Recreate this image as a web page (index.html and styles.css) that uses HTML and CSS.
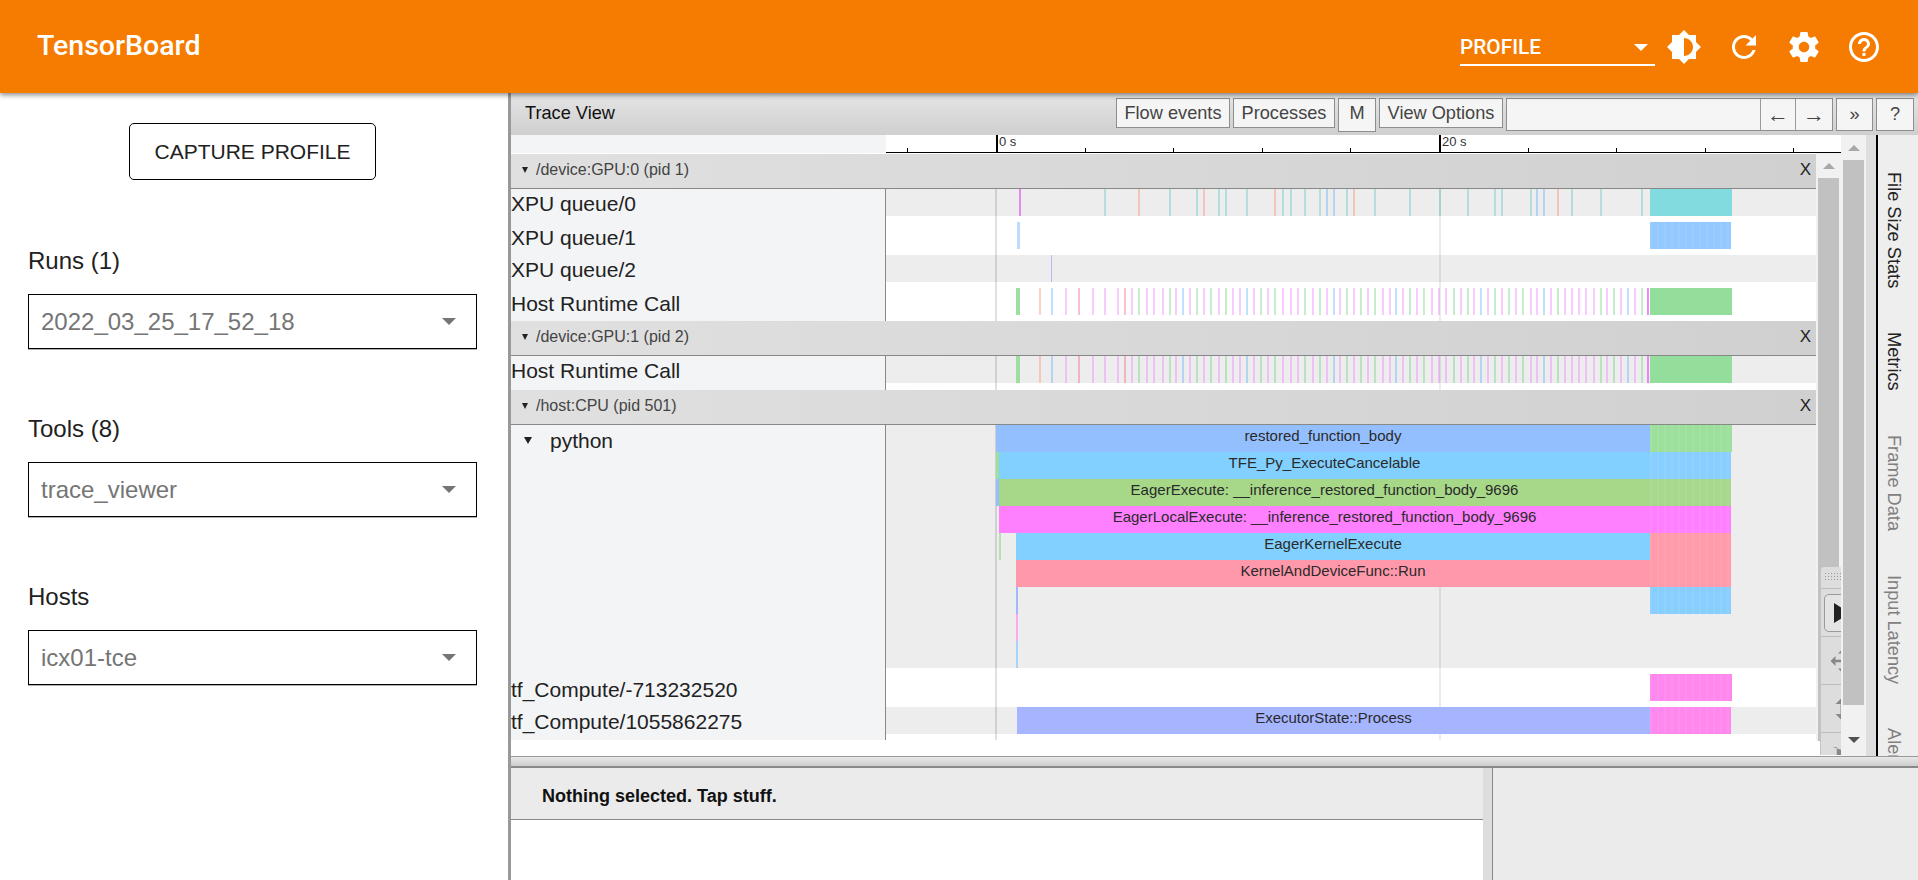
FILE: index.html
```html
<!DOCTYPE html>
<html>
  <head>
    <meta charset="UTF-8">
    <title>TensorBoard</title>
    <link rel="stylesheet" href="styles.css">
  </head>
  <body>
    <!-- Top bar -->
    <header class="topbar">
      <div class="brand">TensorBoard</div>
      <div class="plugin-select">
        <span>PROFILE</span>
        <i class="caret caret-white"></i>
      </div>
      <svg class="top-icon" viewBox="0 0 24 24"><path d="M20 15.31L23.31 12 20 8.69V4h-4.69L12 .69 8.69 4H4v4.69L.69 12 4 15.31V20h4.69L12 23.31 15.31 20H20v-4.69zM12 18V6c3.31 0 6 2.69 6 6s-2.69 6-6 6z"/></svg>
      <svg class="top-icon" viewBox="0 0 24 24"><path d="M17.65 6.35C16.2 4.9 14.21 4 12 4c-4.42 0-7.99 3.58-7.99 8s3.57 8 7.99 8c3.73 0 6.84-2.55 7.73-6h-2.08c-.82 2.33-3.04 4-5.65 4-3.31 0-6-2.69-6-6s2.69-6 6-6c1.66 0 3.14.69 4.22 1.78L13 11h7V4l-2.35 2.35z"/></svg>
      <svg class="top-icon" viewBox="0 0 24 24"><path d="M19.43 12.98c.04-.32.07-.64.07-.98s-.03-.66-.07-.98l2.11-1.65c.19-.15.24-.42.12-.64l-2-3.46c-.12-.22-.39-.3-.61-.22l-2.49 1c-.52-.4-1.08-.73-1.69-.98l-.38-2.65C14.46 2.18 14.25 2 14 2h-4c-.25 0-.46.18-.49.42l-.38 2.65c-.61.25-1.17.59-1.69.98l-2.49-1c-.23-.09-.49 0-.61.22l-2 3.46c-.13.22-.07.49.12.64l2.11 1.65c-.04.32-.07.65-.07.98s.03.66.07.98l-2.11 1.65c-.19.15-.24.42-.12.64l2 3.46c.12.22.39.3.61.22l2.49-1c.52.4 1.08.73 1.69.98l.38 2.65c.03.24.24.42.49.42h4c.25 0 .46-.18.49-.42l.38-2.65c.61-.25 1.17-.59 1.69-.98l2.49 1c.23.09.49 0 .61-.22l2-3.46c.12-.22.07-.49-.12-.64l-2.11-1.65zM12 15.5c-1.93 0-3.5-1.57-3.5-3.5s1.57-3.5 3.5-3.5 3.5 1.57 3.5 3.5-1.57 3.5-3.5 3.5z"/></svg>
      <svg class="top-icon" viewBox="0 0 24 24"><path d="M11 18h2v-2h-2v2zm1-16C6.48 2 2 6.48 2 12s4.48 10 10 10 10-4.48 10-10S17.52 2 12 2zm0 18c-4.41 0-8-3.59-8-8s3.59-8 8-8 8 3.59 8 8-3.59 8-8 8zm0-14c-2.21 0-4 1.79-4 4h2c0-1.1.9-2 2-2s2 .9 2 2c0 2-3 1.75-3 5h2c0-2.25 3-2.5 3-5 0-2.21-1.79-4-4-4z"/></svg>
    </header>

    <div class="layout">
      <!-- Left sidebar -->
      <aside class="sidebar">
        <button class="capture-btn">CAPTURE PROFILE</button>
        <div class="field">
          <div class="field-label">Runs (1)</div>
          <div class="field-select"><span>2022_03_25_17_52_18</span><i class="caret caret-grey"></i></div>
        </div>
        <div class="field">
          <div class="field-label">Tools (8)</div>
          <div class="field-select"><span>trace_viewer</span><i class="caret caret-grey"></i></div>
        </div>
        <div class="field">
          <div class="field-label">Hosts</div>
          <div class="field-select"><span>icx01-tce</span><i class="caret caret-grey"></i></div>
        </div>
      </aside>

      <!-- Trace viewer -->
      <main class="viewer">
        <div class="toolbar">
          <div class="toolbar-title">Trace View</div>
          <button class="tb-btn w-flow">Flow events</button>
          <button class="tb-btn w-proc">Processes</button>
          <button class="tb-btn w-m">M</button>
          <button class="tb-btn w-view">View Options</button>
          <div class="search">
            <button class="nav-btn">←</button>
            <button class="nav-btn">→</button>
          </div>
          <button class="tb-btn tb-tall w-more">»</button>
          <button class="tb-btn tb-tall w-help">?</button>
        </div>

        <div class="view">
          <div class="view-main">
            <div class="ruler-row">
              <div class="ruler-spacer"></div>
              <div class="ruler" id="ruler"></div>
            </div>
            <div class="view-body">
              <div class="tracks">
                <div class="proc-header"><i class="tri"></i><span>/device:GPU:0 (pid 1)</span><b class="close">X</b></div>
                <div class="row row-grey"><div class="label">XPU queue/0</div><div class="track" id="xpu0"></div></div>
                <div class="row row-white"><div class="label">XPU queue/1</div><div class="track" id="xpu1"></div></div>
                <div class="row row-grey"><div class="label">XPU queue/2</div><div class="track" id="xpu2"></div></div>
                <div class="row row-white"><div class="label">Host Runtime Call</div><div class="track" id="host0"></div></div>
                <div class="proc-header"><i class="tri"></i><span>/device:GPU:1 (pid 2)</span><b class="close">X</b></div>
                <div class="row row-grey"><div class="label">Host Runtime Call</div><div class="track" id="host1"></div></div>
                <div class="row row-rest"><div class="label"></div><div class="track"></div></div>
                <div class="proc-header"><i class="tri"></i><span>/host:CPU (pid 501)</span><b class="close">X</b></div>
                <div class="row row-python">
                  <div class="label label-python"><i class="tri"></i><span>python</span></div>
                  <div class="track" id="python"></div>
                </div>
                <div class="row row-white"><div class="label">tf_Compute/-713232520</div><div class="track" id="tf0"></div></div>
                <div class="row row-grey"><div class="label">tf_Compute/1055862275</div><div class="track" id="tf1"></div></div>
                <div class="row row-end"><div class="label"></div><div class="track"></div></div>
              </div>
              <div class="scroll-inner">
                <i class="arrow-up"></i>
                <div class="thumb-inner"></div>
              </div>
              <!-- Floating mouse mode selector -->
              <div class="mode-card">
                <div class="mode-grip"></div>
                <div class="mode-item">
                  <div class="mode-active">
                    <svg class="mode-cursor" width="16" height="20" viewBox="0 0 16 20"><path d="M0 0l16 10-16 10z" fill="#222"/></svg>
                  </div>
                </div>
                <div class="mode-item">
                  <svg class="mode-icon" width="30" height="30" viewBox="0 0 24 24"><path d="M12 2l4 4h-3v5h5V8l4 4-4 4v-3h-5v5h3l-4 4-4-4h3v-5H6v3l-4-4 4-4v3h5V6H8z" fill="#888"/></svg>
                </div>
                <div class="mode-item">
                  <svg class="mode-icon" width="30" height="30" viewBox="0 0 24 24"><path d="M12 2l6 6h-4v8h4l-6 6-6-6h4V8H6z" fill="#888"/></svg>
                </div>
                <div class="mode-item mode-last">
                  <svg class="mode-icon" width="30" height="30" viewBox="0 0 24 24"><path d="M4 4h3v16h14v-3l-5 1V8z" fill="#888"/></svg>
                </div>
              </div>
            </div>
          </div>
          <div class="scroll-outer">
            <i class="arrow-up"></i>
            <div class="thumb-outer"></div>
            <i class="arrow-down"></i>
          </div>
          <div class="gutter"></div>
          <div class="tabs">
            <div class="tab tab-on">File Size Stats</div>
            <div class="tab tab-on">Metrics</div>
            <div class="tab">Frame Data</div>
            <div class="tab">Input Latency</div>
            <div class="tab">Alerts</div>
          </div>
        </div>

        <div class="drag-bar"></div>

        <div class="details">
          <div class="details-left">
            <div class="details-head">Nothing selected. Tap stuff.</div>
          </div>
          <div class="details-split"></div>
          <div class="details-right"></div>
        </div>
      </main>
    </div>

    <script src="script.js"></script>
  </body>
</html>
```

FILE: styles.css
```css
/* Reset default margins and paddings */
* {
  box-sizing: border-box;
  margin: 0;
  padding: 0;
}

html, body {
  width: 100%;
  height: 100%;
  overflow: hidden;
  background-color: #ffffff;
  font-family: "Liberation Sans", Arial, sans-serif;
}

body {
  display: flex;
  flex-direction: column;
}

i {
  display: block;
}

/* Top bar */
.topbar {
  position: relative;
  z-index: 5;
  flex: none;
  height: 93px;
  display: flex;
  align-items: center;
  padding: 0 36px 0 37px;
  background-color: #f57c00;
  color: #ffffff;
  box-shadow: 0 2px 5px rgba(0, 0, 0, 0.45);
  font-family: Roboto, sans-serif;
}

.brand {
  font-size: 28.5px;
  font-weight: 500;
  margin-right: auto;
  margin-top: -2px;
}

.plugin-select {
  width: 195px;
  height: 34px;
  margin-top: 5px;
  display: flex;
  align-items: center;
  justify-content: space-between;
  padding: 0 7px 2px 0;
  border-bottom: 2px solid #ffffff;
  font-size: 20.8px;
  font-weight: 500;
}

.top-icon {
  width: 36px;
  height: 36px;
  margin-left: 24px;
  fill: #ffffff;
  flex: none;
}

.plugin-select + .top-icon {
  margin-left: 11px;
}

.caret {
  width: 0;
  height: 0;
  border-left: 7px solid transparent;
  border-right: 7px solid transparent;
}

.caret-white {
  border-top: 7px solid #ffffff;
}

.caret-grey {
  border-top: 7px solid #757575;
}

/* Page body */
.layout {
  flex: 1;
  display: flex;
  min-height: 0;
}

.sidebar {
  flex: none;
  width: 511px;
  border-right: 3px solid #999999;
  padding: 30px 31px 0 28px;
  display: flex;
  flex-direction: column;
}

.capture-btn {
  align-self: center;
  width: 247px;
  height: 57px;
  background: #ffffff;
  border: 1px solid #000000;
  border-radius: 5px;
  font-family: "Liberation Sans", Arial, sans-serif;
  font-size: 21px;
  color: #212121;
}

.field {
  margin-bottom: 68px;
}

.capture-btn + .field {
  margin-top: 69px;
}

.field-label {
  font-size: 24px;
  line-height: 24px;
  color: #212121;
  margin-bottom: 21px;
}

.field-select {
  height: 55px;
  border: 1px solid #000000;
  box-shadow: 0 1px 0 rgba(0, 0, 0, 0.3);
  display: flex;
  align-items: center;
  justify-content: space-between;
  padding: 0 20px 0 12px;
  font-size: 24px;
  color: #757575;
}

/* Trace viewer */
.viewer {
  flex: 1;
  min-width: 0;
  display: flex;
  flex-direction: column;
}

.toolbar {
  flex: none;
  height: 42px;
  display: flex;
  align-items: flex-start;
  gap: 3px;
  padding: 5px 4px 0 14px;
  background: linear-gradient(#e5e5e5, #cfcfcf);
}

.toolbar-title {
  font-size: 18.2px;
  line-height: 30px;
  color: #111111;
  margin-right: auto;
}

.tb-btn {
  height: 30px;
  background: #f5f5f5;
  border: 1px solid #8e8e8e;
  font-family: "Liberation Sans", Arial, sans-serif;
  font-size: 18.2px;
  color: #444444;
}

.tb-tall {
  height: 33px;
}

.w-flow { width: 114px; }
.w-proc { width: 102px; }
.w-m { width: 38px; height: 34px; padding-bottom: 4px; }
.w-view { width: 124px; }
.w-more { width: 37px; }
.w-help { width: 38px; }

.search {
  width: 327px;
  height: 33px;
  background: #f5f5f5;
  border: 1px solid #8e8e8e;
  display: flex;
  justify-content: flex-end;
}

.nav-btn {
  width: 36px;
  background: #f5f5f5;
  border: 1px solid #9a9a9a;
  border-width: 0 1px 0 1px;
  font-family: "Liberation Sans", Arial, sans-serif;
  font-size: 22px;
  color: #444444;
}

.nav-btn + .nav-btn {
  border-left: 0;
  border-right: 0;
}

.view {
  flex: none;
  height: 621px;
  display: flex;
}

.view-main {
  flex: none;
  width: 1330px;
  display: flex;
  flex-direction: column;
}

/* Time ruler */
.ruler-row {
  flex: none;
  height: 18px;
  display: flex;
}

.ruler-spacer {
  flex: none;
  width: 375px;
  background-color: #f3f4f6;
}

.ruler {
  position: relative;
  flex: 1;
  background: #ffffff;
  border-bottom: 1px solid #000000;
}

.tick {
  position: absolute;
  bottom: 0;
  width: 1px;
  height: 4px;
  background-color: #000000;
}

.tick-major {
  width: 2px;
  height: 17px;
}

.tick-label {
  position: absolute;
  top: -1px;
  font-size: 13px;
  line-height: 15px;
  color: #333333;
}

.view-body {
  position: relative;
  flex: 1;
  min-height: 0;
  display: flex;
}

.tracks {
  flex: none;
  width: 1305px;
  padding-top: 1px;
}

/* Process headers and rows */
.proc-header {
  height: 35px;
  display: flex;
  align-items: center;
  border-bottom: 1px solid #888888;
  background: linear-gradient(to right, #e0e0e0, #d0d0d0);
  padding: 0 5px 2px 11px;
  font-size: 16px;
  color: #444444;
}

.proc-header span {
  margin-left: 8px;
}

.tri {
  width: 0;
  height: 0;
  border-left: 3.5px solid transparent;
  border-right: 3.5px solid transparent;
  border-top: 6px solid #222222;
}

.close {
  margin-left: auto;
  font-weight: normal;
  font-size: 17px;
  color: #222222;
}

.row {
  display: flex;
}

.row-grey { height: 27px; }
.row-white { height: 39px; }
.row-rest { height: 7px; }
.row-python { height: 243px; }
.row-end { height: 6px; }

.label {
  flex: none;
  width: 375px;
  background-color: #f3f4f6;
  border-right: 1px solid #888888;
  font-size: 21px;
  line-height: 27px;
  color: #222222;
  white-space: nowrap;
}

.row-grey .label {
  padding-top: 1px;
}

.row-white .label {
  padding-top: 2px;
  line-height: 39px;
}

.label-python {
  display: flex;
  align-items: flex-start;
  padding-left: 13px;
}

.label-python .tri {
  margin-top: 12px;
  border-left-width: 4px;
  border-right-width: 4px;
  border-top-width: 7px;
}

.label-python span {
  margin-left: 18px;
  line-height: 32px;
}

/* Timeline tracks, the bars are placed from data in script.js */
.track {
  position: relative;
  flex: 1;
  overflow: hidden;
  background-color: #ffffff;
  background-image: linear-gradient(rgba(0, 0, 0, 0.12), rgba(0, 0, 0, 0.12)), linear-gradient(rgba(0, 0, 0, 0.08), rgba(0, 0, 0, 0.08));
  background-size: 2px 100%, 2px 100%;
  background-position: 109px 0, 553px 0;
  background-repeat: no-repeat;
}

.row-grey .track,
.row-python .track {
  background-color: #ededed;
}

.bar {
  position: absolute;
  overflow: hidden;
  white-space: nowrap;
  text-align: center;
  font-size: 15px;
  line-height: 22px;
  color: #2a2a2a;
}

.bar-dense {
  background-image: repeating-linear-gradient(to right, rgba(255, 255, 255, 0.06) 0, rgba(255, 255, 255, 0.06) 2px, transparent 2px, transparent 7px);
}

/* Scrollbars */
.scroll-inner {
  flex: none;
  width: 25px;
  background-color: #f1f1f1;
  display: flex;
  flex-direction: column;
  align-items: center;
  padding-top: 10px;
  height: 588px;
}

.thumb-inner {
  width: 21px;
  margin-top: 9px;
  flex: 1;
  background-color: #c1c1c1;
}

.arrow-up {
  width: 0;
  height: 0;
  border-left: 6px solid transparent;
  border-right: 6px solid transparent;
  border-bottom: 6px solid #a8a8a8;
}

.arrow-down {
  width: 0;
  height: 0;
  margin-top: 32px;
  border-left: 6px solid transparent;
  border-right: 6px solid transparent;
  border-top: 6px solid #505050;
}

.scroll-outer {
  flex: none;
  width: 25px;
  background-color: #f1f1f1;
  display: flex;
  flex-direction: column;
  align-items: center;
  padding-top: 10px;
}

.thumb-outer {
  width: 21px;
  height: 545px;
  margin-top: 9px;
  background-color: #c1c1c1;
}

.gutter {
  flex: none;
  width: 10px;
  background-color: #dedede;
}

/* Side tabs */
.tabs {
  flex: 1;
  overflow: hidden;
  background-color: #eeeeee;
  border-left: 2px solid #000000;
  padding: 37px 0 0 6px;
  display: flex;
  flex-direction: column;
  align-items: flex-start;
  gap: 44px;
}

.tab {
  flex: none;
  writing-mode: vertical-rl;
  font-size: 18.2px;
  line-height: 20px;
  color: #808080;
  white-space: nowrap;
}

.tab-on {
  color: #222222;
}

/* Floating mouse mode card */
.mode-card {
  position: absolute;
  left: 1309px;
  top: 414px;
  width: 21px;
  height: 188px;
  overflow: hidden;
  background: #dddddd;
  border-radius: 4px 0 0 0;
  border-left: 1px solid #c4c4c4;
}

.mode-grip {
  height: 22px;
  border-bottom: 1px solid #bbbbbb;
  background-image: radial-gradient(#999999 0.7px, transparent 0.8px);
  background-size: 3px 3px;
  background-position: 3px 5px;
  background-repeat: repeat;
  background-clip: content-box;
  padding: 5px 0 7px 3px;
}

.mode-item {
  height: 48px;
  display: flex;
  align-items: center;
  padding-left: 3px;
  border-bottom: 1px solid #bbbbbb;
}

.mode-last {
  border-bottom: 0;
}

.mode-active {
  width: 30px;
  height: 38px;
  flex: none;
  display: flex;
  align-items: center;
  padding-left: 9px;
  border: 1px solid #9a9a9a;
  border-radius: 5px;
  background-color: #e4e4e4;
}

.mode-cursor {
  flex: none;
}

.mode-icon {
  flex: none;
  margin-left: 4px;
}

/* Drag handle above the details panel */
.drag-bar {
  flex: none;
  height: 12px;
  border-top: 1px solid #999999;
  border-bottom: 2px solid #888888;
  background: linear-gradient(#e8e8e8, #cdcdcd);
}

/* Details panel */
.details {
  flex: 1;
  min-height: 0;
  display: flex;
}

.details-left {
  flex: none;
  width: 972px;
}

.details-head {
  height: 52px;
  padding-left: 31px;
  background-color: #ebebeb;
  border-bottom: 1px solid #888888;
  font-size: 18px;
  font-weight: bold;
  line-height: 56px;
  color: #111111;
}

.details-split {
  flex: none;
  width: 10px;
  background-color: #dddddd;
  border-right: 1px solid #888888;
}

.details-right {
  flex: 1;
  background-color: #ebebeb;
}
```

FILE: script.js
```js
// Places the ruler ticks and timeline bars, x values are page pixels
var TRACK_LEFT = 886;
var SPLIT_X = 1650;
var END_X = 1732;

var TICK_COLORS = {
  m: 'rgba(236, 120, 255, 0.38)',
  M: 'rgba(226, 90, 245, 0.7)',
  g: 'rgba(90, 200, 110, 0.34)',
  b: 'rgba(90, 165, 255, 0.36)',
  s: 'rgba(255, 120, 95, 0.34)',
  p: 'rgba(255, 100, 130, 0.42)',
  t: 'rgba(60, 190, 190, 0.32)',
  v: 'rgba(100, 120, 240, 0.45)'
};

var QUEUE_TICKS = '1019M 1104t 1138s 1169t 1196t 1203s 1218t 1225t 1246t 1274s 1282t 1290t 1304t 1319t 1326b 1333b 1346t 1353s 1374t ' +
  '1409t 1439t 1467t 1494t 1501t 1530t 1536b 1543b 1557s 1571t 1600t 1641t';

var HOST_TICKS = '1039s 1051b 1065m 1078p 1092m 1104m 1117m 1124p 1131m 1138g 1146m 1153m 1162m 1169g 1175m 1182b 1189m 1196g ' +
  '1203m 1210g 1218m 1225g 1232m 1239m 1246b 1253m 1260g 1267m 1274g 1282m 1290m 1297m 1304g 1312m 1319g 1326m 1333b 1339m ' +
  '1346g 1353m 1360g 1367m 1374g 1382m 1389m 1395b 1402m 1409g 1416m 1423g 1431m 1438m 1445m 1453g 1460m 1467g 1473m 1480b ' +
  '1487m 1494g 1501m 1508g 1515m 1522g 1530m 1536m 1543b 1550m 1557g 1564m 1571m 1578m 1585m 1593m 1600g 1606m 1613g 1620m ' +
  '1627b 1634m 1641g 1647M';

function addBar(trackId, x1, x2, top, height, color, text, dense) {
  var bar = document.createElement('div');
  bar.className = dense ? 'bar bar-dense' : 'bar';
  bar.style.left = (x1 - TRACK_LEFT) + 'px';
  bar.style.width = (x2 - x1) + 'px';
  bar.style.top = top + 'px';
  bar.style.height = height + 'px';
  bar.style.backgroundColor = color;
  if (text) {
    bar.textContent = text;
  }
  document.getElementById(trackId).appendChild(bar);
}

function addTicks(trackId, list, top, height) {
  list.split(' ').forEach(function(item) {
    var x = parseInt(item, 10);
    var color = TICK_COLORS[item.charAt(item.length - 1)];
    addBar(trackId, x, x + 2, top, height, color);
  });
}

function addRuler() {
  var ruler = document.getElementById('ruler');
  var step = 88.6;
  for (var i = -1; i <= 9; i++) {
    var tick = document.createElement('div');
    var major = i === 0 || i === 5;
    tick.className = major ? 'tick tick-major' : 'tick';
    var x = Math.round(996 + i * step) - TRACK_LEFT;
    tick.style.left = x + 'px';
    ruler.appendChild(tick);
    if (major) {
      var label = document.createElement('div');
      label.className = 'tick-label';
      label.style.left = (x + 3) + 'px';
      label.textContent = i === 0 ? '0 s' : '20 s';
      ruler.appendChild(label);
    }
  }
}

addRuler();

// GPU:0
addTicks('xpu0', QUEUE_TICKS, 0, 27);
addBar('xpu0', SPLIT_X, END_X, 0, 27, '#82dcdf');
addBar('xpu1', 1017, 1020, 6, 27, '#bcdcff');
addBar('xpu1', SPLIT_X, END_X - 1, 6, 27, '#94c9ff', '', true);
addBar('xpu2', 1051, 1052, 0, 27, '#b4bcf8');
addTicks('host0', HOST_TICKS, 6, 27);
addBar('host0', 1016, 1020, 6, 27, '#9cdfa0');
addBar('host0', SPLIT_X, END_X, 6, 27, '#92de9a');

// GPU:1
addTicks('host1', HOST_TICKS, 0, 27);
addBar('host1', 1016, 1020, 0, 27, '#9cdfa0');
addBar('host1', SPLIT_X, END_X, 0, 27, '#92de9a');

// host CPU, python thread
addBar('python', 996, SPLIT_X, 0, 27, '#94bfff', 'restored_function_body');
addBar('python', SPLIT_X, END_X, 0, 27, '#9ce09c', '', true);

addBar('python', 996, 999, 27, 27, '#9ce09c');
addBar('python', 999, SPLIT_X, 27, 27, '#82d0ff', 'TFE_Py_ExecuteCancelable');
addBar('python', SPLIT_X, END_X - 1, 27, 27, '#88cfff', '', true);

addBar('python', 996, 999, 54, 27, '#94bfff');
addBar('python', 999, SPLIT_X, 54, 27, '#a6d888', 'EagerExecute: __inference_restored_function_body_9696');
addBar('python', SPLIT_X, END_X - 1, 54, 27, '#a8d88c', '', true);

addBar('python', 999, SPLIT_X, 81, 27, '#ff80ff', 'EagerLocalExecute: __inference_restored_function_body_9696');
addBar('python', SPLIT_X, END_X - 1, 81, 27, '#ff80ff', '', true);

addBar('python', 999, 1001, 108, 27, '#b4e0b4');
addBar('python', 1016, SPLIT_X, 108, 27, '#82d0ff', 'EagerKernelExecute');
addBar('python', SPLIT_X, END_X - 1, 108, 27, '#ff9bab', '', true);

addBar('python', 1016, SPLIT_X, 135, 27, '#ff98ab', 'KernelAndDeviceFunc::Run');
addBar('python', SPLIT_X, END_X - 1, 135, 27, '#ff9bab', '', true);

addBar('python', 1016, 1018, 162, 27, '#a6b5ff');
addBar('python', SPLIT_X, END_X - 1, 162, 27, '#88cfff', '', true);
addBar('python', 1016, 1018, 189, 27, '#ffa8e8');
addBar('python', 1016, 1018, 216, 27, '#a8d4f8');

// tf_Compute threads
addBar('tf0', SPLIT_X, END_X, 6, 27, '#ff88ee', '', true);
addBar('tf1', 1017, SPLIT_X, 0, 27, '#a6b5ff', 'ExecutorState::Process');
addBar('tf1', SPLIT_X, END_X - 1, 0, 27, '#ff88ee', '', true);
```
